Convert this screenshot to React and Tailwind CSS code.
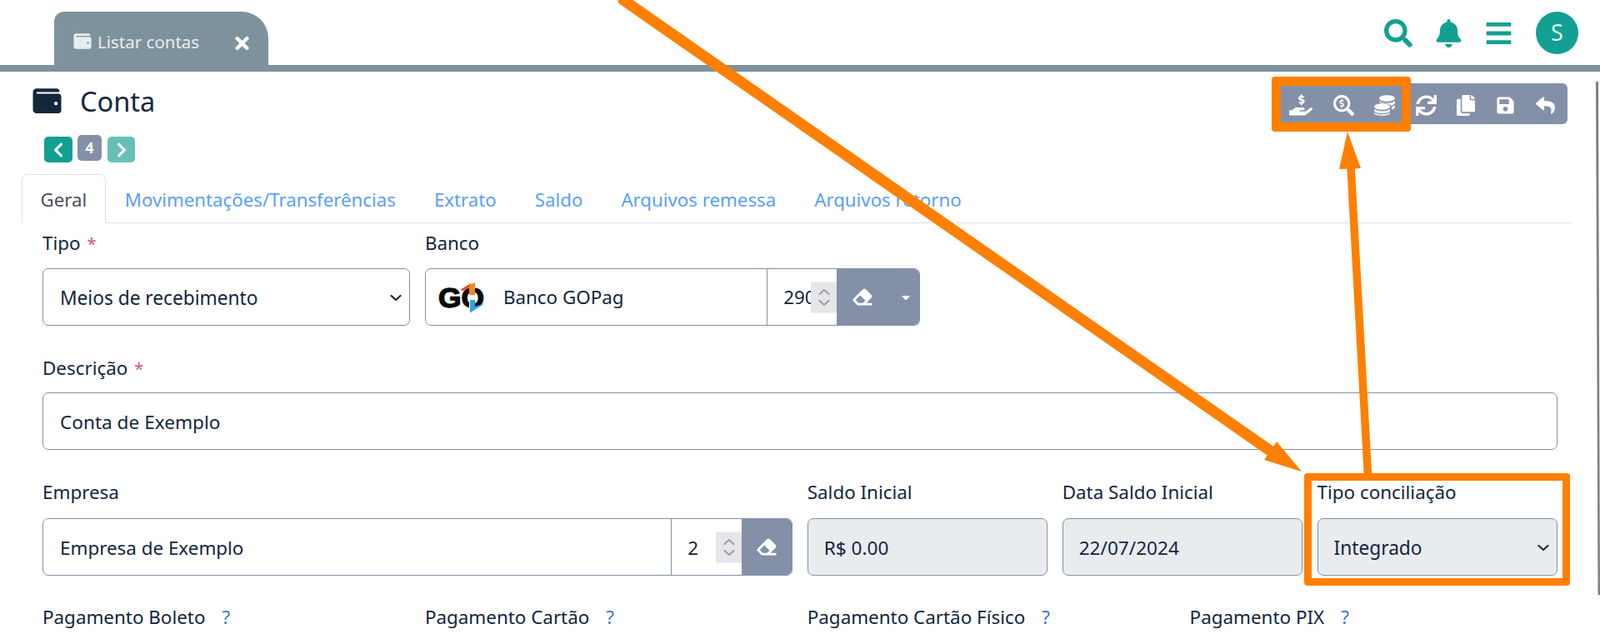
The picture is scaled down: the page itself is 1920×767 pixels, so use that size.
import React from "react";
import { FaWallet, FaTimes, FaSearch, FaBell, FaBars, FaHandHoldingUsd, FaSearchDollar, FaSync, FaCopy, FaSave, FaReply, FaChevronLeft, FaChevronRight, FaEraser, FaCaretDown } from "react-icons/fa";

function Chev({ up, className }) {
  return (
    <svg viewBox="0 0 14 8" className={className} fill="none" stroke="currentColor" strokeWidth="2.2" strokeLinecap="round" strokeLinejoin="round">
      <polyline points={up ? "1.5,6.5 7,1.5 12.5,6.5" : "1.5,1.5 7,6.5 12.5,1.5"} />
    </svg>
  );
}

function Coins({ className }) {
  return (
    <svg viewBox="0 0 25 25" className={className} fill="currentColor">
      <ellipse cx="15.5" cy="4" rx="9.5" ry="3.8" />
      <path d="M6 7.2 c2 1.6 5.5 2.4 9.5 2.4 s7.5-.8 9.5-2.4 v2 c0 1.6-2.2 3-5 3.6 c-1.8-2-5-3-9-3 h-1.5 C7.5 9.4 6 8.8 6 7.2z" />
      <path d="M21 14.2 c1.7-.4 3-1 4-1.8 v2.2 c0 1.2-1.5 2.3-4 3z" />
      <ellipse cx="9.5" cy="14" rx="9.5" ry="3.8" />
      <path d="M0 17 c2 1.6 5.5 2.5 9.5 2.5 s7.5-.9 9.5-2.5 v1.6 c0 2-4.2 3.5-9.5 3.5 S0 20.6 0 18.6z" />
      <path d="M0 21 c2 1.5 5.5 2.3 9.5 2.3 s7.5-.8 9.5-2.3 v.6 c0 2-4.2 3.4-9.5 3.4 S0 23.6 0 21.6z" />
    </svg>
  );
}

function Spinner() {
  return (
    <div className="absolute right-0 top-1/2 -translate-y-1/2 w-[31px] h-[37px] bg-[#e6e6ea] flex flex-col items-center justify-center gap-[5px] text-[#a0a0a8]">
      <Chev up className="w-[14px] h-[8px]" />
      <Chev className="w-[14px] h-[8px]" />
    </div>
  );
}

function Label({ children, req, mb = "mb-[15px]" }) {
  return (
    <label className={`block h-[30px] leading-[30px] text-[#12263f] whitespace-nowrap ${mb}`}>
      {children}
      {req && <span className="text-[#d9506a] text-[20px] ml-[8px]">*</span>}
    </label>
  );
}

function Select({ value, disabled }) {
  return (
    <div className="relative h-[69px]">
      <select
        disabled={disabled}
        defaultValue={value}
        className={`appearance-none w-full h-full rounded-[7px] border border-[#8490a8] pt-[3px] pr-[40px] text-[22.7px] text-[#12263f] opacity-100 outline-none ${disabled ? "bg-[#e9ecef] pl-[19px]" : "bg-white pl-[20px]"}`}
      >
        <option>{value}</option>
      </select>
      <Chev className="absolute right-[10px] top-[31px] w-[14px] h-[9px] text-[#1a2a3a]" />
    </div>
  );
}

function TextInput({ value, disabled }) {
  return (
    <input
      readOnly
      value={value}
      className={`block w-full h-[69px] rounded-[7px] border border-[#8490a8] pt-[2px] pr-[20px] text-[22.6px] text-[#12263f] outline-none ${disabled ? "bg-[#e9ecef] pl-[19px]" : "bg-white pl-[20px]"}`}
    />
  );
}

function GoLogo() {
  return (
    <svg width="60" height="44" viewBox="0 0 60 44" className="shrink-0">
      <text x="2" y="34" fontFamily="Liberation Sans, sans-serif" fontWeight="700" fontSize="34" fill="#0a0a0a" stroke="#0a0a0a" strokeWidth="1.4" textLength="55" lengthAdjust="spacingAndGlyphs">GO</text>
      <rect x="39" y="3" width="7" height="38" fill="#fff" />
      <path d="M28 13 L41 5 L41 9 L32 14 Z" fill="#e2472a" />
      <path d="M39 7 L46 4 L46 19 L39 19 Z" fill="#ee8a1e" />
      <path d="M40 25 L46 25 L46 33 L58 29 L41 40 L40 40 Z" fill="#29a5e0" />
    </svg>
  );
}

function Question() {
  return <span className="text-[#3f74d6] ml-[20px]">?</span>;
}

const tools = [
  [FaHandHoldingUsd, "w-[28px] h-[26px]"],
  [FaSearchDollar, "w-[25px] h-[25px]"],
  [Coins, "w-[25px] h-[25px]"],
  [FaSync, "w-[25px] h-[25px]"],
  [FaCopy, "w-[22px] h-[25px]"],
  [FaSave, "w-[23px] h-[23px]"],
  [FaReply, "w-[25px] h-[23px]"],
];

export default function App() {
  return (
    <div className="relative w-[1920px] h-[767px] overflow-hidden bg-white text-[22.4px] text-[#12263f] font-['Noto_Sans','Open_Sans',sans-serif]">
      <header className="h-[78px] flex items-end justify-between pl-[65px] pr-[26px]">
        <div className="w-[257px] h-[64px] bg-[#7d929c] rounded-tl-[12px] rounded-tr-[32px] flex items-start pl-[23px] pr-[23px] pt-[21px] text-[#e9edf0]">
          <FaWallet className="w-[22px] h-[21px] mt-[4px] mr-[7px] shrink-0" />
          <span className="leading-[30px] text-[20.5px]">Listar contas</span>
          <FaTimes className="ml-auto mt-[5px] w-[17px] h-[24px] text-white shrink-0" />
        </div>
        <div className="flex items-center self-start mt-[14px] text-[#12a093]">
          <FaSearch className="w-[34px] h-[34px] mr-[28px]" />
          <FaBell className="w-[31px] h-[34px] mr-[29px]" />
          <FaBars className="w-[31px] h-[34px] mr-[29px]" />
          <div className="w-[51px] h-[51px] rounded-full bg-[#12a093] text-[#dff2ef] text-[27px] flex items-center justify-center">S</div>
        </div>
      </header>
      <div className="h-2 bg-[#7d929c]" />

      <div className="h-[76px] flex justify-between items-start px-[39px]">
        <div className="flex items-center mt-[15px] h-[40px]">
          <FaWallet className="w-[35px] h-[34px] mr-[22px] text-[#14273a]" />
          <h1 className="text-[32.5px] font-normal text-[#12263f] pt-[2px]">Conta</h1>
        </div>
        <div className="mt-[14px] h-[49px] w-[346px] rounded-[6px] bg-[#8490a8] flex items-center justify-between pl-[12px] pr-[14px] pt-[3px] text-white">
          {tools.map(([Icon, cls], i) => (
            <Icon key={i} className={cls} />
          ))}
        </div>
      </div>

      <div className="h-[47px] ml-[53px] flex items-start text-white">
        <div className="w-[34px] h-[31px] mt-[2px] rounded-[5px] bg-[#12a093] flex items-center justify-center">
          <FaChevronLeft className="w-[14px] h-[20px]" />
        </div>
        <div className="w-[29px] h-[31px] ml-[6px] rounded-[5px] bg-[#8490a8] flex items-center justify-center text-[18px] font-bold">4</div>
        <div className="w-[33px] h-[31px] mt-[2px] ml-[7px] rounded-[5px] bg-[#66c0b7] flex items-center justify-center">
          <FaChevronRight className="w-[14px] h-[20px]" />
        </div>
      </div>

      <nav className="ml-[26px] mr-[34px] h-[59px] flex items-start border-b border-[#dee2e6] text-[22.25px]">
        <div className="h-[59px] px-[21.5px] border border-b-white border-[#dee2e6] rounded-t-[7px] bg-white text-[#495057] leading-[60px]">Geral</div>
        {["Movimentações/Transferências", "Extrato", "Saldo", "Arquivos remessa", "Arquivos retorno"].map((t) => (
          <div key={t} className="px-[23px] leading-[62px] text-[#5a9ffb] whitespace-nowrap">{t}</div>
        ))}
      </nav>

      <div className="grid grid-cols-12 gap-x-[17.5px] gap-y-[35px] pl-[51px] pr-[51px] pt-[9px]">
        <div className="col-span-3">
          <Label req>Tipo</Label>
          <Select value="Meios de recebimento" />
        </div>
        <div className="col-span-4">
          <Label>Banco</Label>
          <div className="h-[69px] flex rounded-[7px] border border-[#8490a8] overflow-hidden">
            <div className="flex items-center flex-1 pl-[13px]">
              <GoLogo />
              <span className="ml-[20px]">Banco GOPag</span>
            </div>
            <div className="relative w-[84px] border-l border-[#8490a8] pl-[19px] pt-[1px] flex items-center overflow-hidden">
              <span>290</span>
              <Spinner />
            </div>
            <div className="w-[99px] bg-[#8490a8] flex items-center text-white pl-[18px]">
              <FaEraser className="w-[26px] h-[23px]" />
              <FaCaretDown className="w-[14px] h-[16px] ml-[32px]" />
            </div>
          </div>
        </div>
        <div className="col-span-5" />

        <div className="col-span-12 mt-[1px]">
          <Label req mb="mb-[14px]">Descrição</Label>
          <TextInput value="Conta de Exemplo" />
        </div>

        <div className="col-span-6 mt-[1px]">
          <Label mb="mb-[16px]">Empresa</Label>
          <div className="h-[69px] flex rounded-[7px] border border-[#8490a8] overflow-hidden">
            <div className="flex items-center flex-1 pl-[20px] pt-[2px]">Empresa de Exemplo</div>
            <div className="relative w-[85px] border-l border-[#8490a8] pl-[19px] pt-[2px] flex items-center">
              <span>2</span>
              <Spinner />
            </div>
            <div className="w-[60px] bg-[#8490a8] flex items-center justify-center text-white">
              <FaEraser className="w-[26px] h-[23px]" />
            </div>
          </div>
        </div>
        <div className="col-span-2 mt-[1px]">
          <Label mb="mb-[16px]">Saldo Inicial</Label>
          <TextInput value="R$ 0.00" disabled />
        </div>
        <div className="col-span-2 mt-[1px]">
          <Label mb="mb-[16px]">Data Saldo Inicial</Label>
          <TextInput value="22/07/2024" disabled />
        </div>
        <div className="col-span-2 mt-[1px]">
          <Label mb="mb-[16px]">Tipo conciliação</Label>
          <Select value="Integrado" disabled />
        </div>

        <div className="col-span-3"><Label>Pagamento Boleto<Question /></Label></div>
        <div className="col-span-3"><Label>Pagamento Cartão<Question /></Label></div>
        <div className="col-span-3"><Label>Pagamento Cartão Físico<Question /></Label></div>
        <div className="col-span-3"><Label>Pagamento PIX<Question /></Label></div>
      </div>

      {/* Annotation overlay */}
      <div className="absolute left-[1526px] top-[92px] w-[167px] h-[66px] border-[11px] border-[#ff7f00] rounded-[4px]" />
      <div className="absolute left-[1565px] top-[568px] w-[319px] h-[135px] border-[9px] border-[#ff7f00] rounded-[4px]" />
      <svg className="absolute inset-0 pointer-events-none" width="1920" height="767" viewBox="0 0 1920 767">
        <line x1="748" y1="0" x2="1530" y2="545" stroke="#ff7f00" strokeWidth="13" strokeLinecap="round" />
        <polygon points="1562,566 1532,530 1517,552" fill="#ff7f00" />
        <line x1="1641.5" y1="570" x2="1621" y2="200" stroke="#ff7f00" strokeWidth="9.5" />
        <polygon points="1617,158 1607,203 1633,202" fill="#ff7f00" />
        <polygon points="1915,98 1918,98 1920,714 1917.5,714" fill="#808080" />
      </svg>
    </div>
  );
}
